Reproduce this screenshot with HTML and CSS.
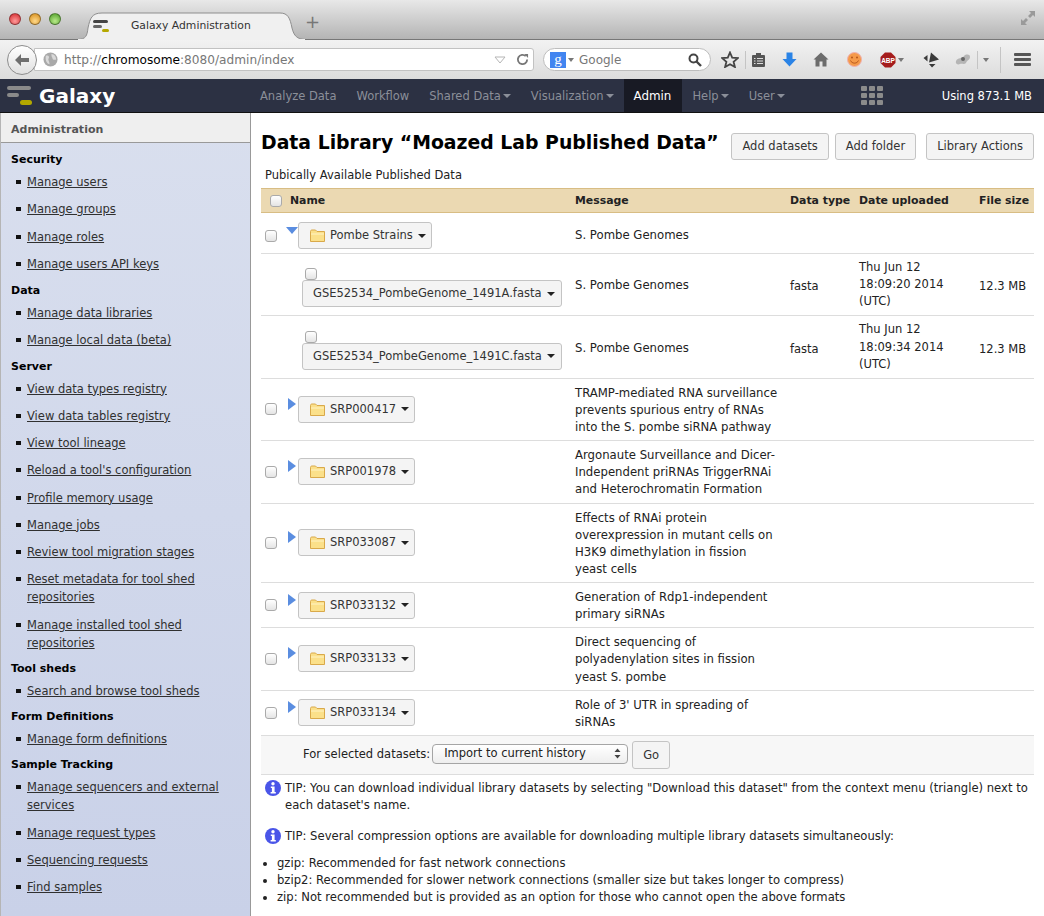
FILE: index.html
```html
<!DOCTYPE html>
<html>
<head>
    <title>Galaxy Administration</title>
    <link rel="stylesheet" href="styles.css">
</head>
<body>
    <div class="tabbar">
        <div class="lights"><i class="light red"></i><i class="light amber"></i><i class="light green"></i></div>
        <div class="tab">
            <svg class="tabshape" width="227" height="28" viewBox="0 0 227 28"><path d="M0 27.5C8 27 9 24 10 16C12 6 14 1 24 1H202C210 1 212 6 214 16C216 24 219 27 227 27.5V28H0Z" fill="#f0f0f0" stroke="#8e8e8e"/><path d="M0 28H227" stroke="#f0f0f0" stroke-width="2"/></svg>
            <svg class="tabicon" width="16" height="14" viewBox="0 0 16 14"><rect x="0" y="1" width="15" height="3" rx="1.5" fill="#444"/><rect x="0" y="6" width="9" height="3" rx="1.5" fill="#666"/><rect x="9" y="10" width="7" height="3" rx="1.5" fill="#b5a800"/></svg>
            <span class="tabtitle">Galaxy Administration</span>
        </div>
        <span class="newtab">+</span>
        <svg class="fullscreen" width="16" height="16" viewBox="0 0 16 16"><path d="M9 1H15V7L13 5L10 8L8 6L11 3ZM7 15H1V9L3 11L6 8L8 10L5 13Z" fill="#9a9a9a"/></svg>
    </div>

    <div class="toolbar">
        <div class="backbtn"><svg width="16" height="14" viewBox="0 0 16 14"><path d="M7 1L1 7L7 13V9H15V5H7Z" fill="#6f6f6f"/></svg></div>
        <div class="urlbox">
            <svg width="15" height="15" viewBox="0 0 16 16"><circle cx="8" cy="8" r="7.5" fill="#a9a9a9"/><path d="M3 4C6 3 7 5 6 7C5 9 7 10 7 13C5 13 2 10 3 4ZM9 2C12 2 14 5 14 8C12 9 10 8 10 6C9 5 9 3 9 2Z" fill="#d9d9d9"/></svg>
            <span class="url"><span class="dim">http://</span>chromosome<span class="dim">:8080/admin/index</span></span>
            <svg class="urlmark" width="12" height="8" viewBox="0 0 12 8"><path d="M1 1H11L6 7Z" fill="none" stroke="#b5b5b5"/></svg>
            <svg width="13" height="13" viewBox="0 0 14 14"><path d="M12 7A5 5 0 1 1 10.5 3.4" fill="none" stroke="#777" stroke-width="2"/><path d="M9 1H13V5.5Z" fill="#777"/></svg>
        </div>
        <div class="searchbox">
            <span class="glogo">g</span><i class="caret grey"></i>
            <span class="searchtext">Google</span>
            <svg width="14" height="14" viewBox="0 0 14 14"><circle cx="5.5" cy="5.5" r="4" fill="none" stroke="#444" stroke-width="2"/><path d="M8.5 8.5L13 13" stroke="#444" stroke-width="2.4"/></svg>
        </div>
        <div class="tools">
            <svg class="t-star" width="18" height="17" viewBox="0 0 18 17"><path d="M9 1.5L11.2 6.6L16.8 7.1L12.6 10.7L13.9 16L9 13.2L4.1 16L5.4 10.7L1.2 7.1L6.8 6.6Z" fill="none" stroke="#444" stroke-width="1.8"/></svg>
            <i class="sep"></i>
            <svg class="t-list" width="15" height="16" viewBox="0 0 15 16"><rect x="1" y="3" width="13" height="12" rx="1" fill="#555"/><rect x="5" y="1" width="5" height="3" fill="#555"/><path d="M3 6.5H4.5M6 6.5H12M3 9H4.5M6 9H12M3 11.5H4.5M6 11.5H12" stroke="#ddd" stroke-width="1.1"/></svg>
            <svg class="t-down" width="15" height="15" viewBox="0 0 15 15"><path d="M4.5 0.5H10.5V7H14.5L7.5 14.5L0.5 7H4.5Z" fill="#2a83e6"/></svg>
            <svg class="t-home" width="16" height="15" viewBox="0 0 16 15"><path d="M8 0.5L15.5 7.5H13.5V14.5H9.5V9.5H6.5V14.5H2.5V7.5H0.5Z" fill="#6c6c6c"/></svg>
            <svg class="t-smile" width="15" height="15" viewBox="0 0 15 15"><circle cx="7.5" cy="7.5" r="7" fill="#f59a4a" stroke="#eeb0b0"/><circle cx="5" cy="5.5" r="1" fill="#b5561a"/><circle cx="10" cy="5.5" r="1" fill="#b5561a"/><path d="M3.5 8.5C5 12 10 12 11.5 8.5" fill="none" stroke="#b5561a"/></svg>
            <svg class="t-abp" width="16" height="16" viewBox="0 0 16 16"><path d="M5 0.5H11L15.5 5V11L11 15.5H5L0.5 11V5Z" fill="#a51c1c"/><text x="8" y="10.5" font-family="Liberation Sans" font-size="6.5" font-weight="700" fill="#fff" text-anchor="middle">ABP</text></svg>
            <i class="caret grey abpcaret"></i>
            <svg class="t-arrow" width="17" height="16" viewBox="0 0 17 16"><path d="M8 0.5L16 7.5L6 10.5ZM0.5 6L4.5 3V9.5ZM6 12H12.5L9 15.5Z" fill="#3a3a3a"/></svg>
            <svg class="t-bug" width="16" height="13" viewBox="0 0 16 13"><path d="M1 8C3 4 7 6 9 3C11 1 15 1 15 4C15 7 12 7 11 10C9 12 7 10 5 11C3 12 0 11 1 8Z" fill="#b5b5b5"/><circle cx="8" cy="6" r="2" fill="#666"/></svg>
            <i class="sep bugsep"></i>
            <i class="caret grey"></i>
            <i class="sep menusep"></i>
            <div class="burger"><i></i><i></i><i></i></div>
        </div>
    </div>

    <div class="navbar">
        <div class="brand">
            <svg width="25" height="21" viewBox="0 0 25 21"><rect x="0" y="1" width="24" height="4" rx="2" fill="#8a8a8a"/><rect x="0" y="8" width="12" height="4" rx="2" fill="#8a8a8a"/><rect x="13" y="15" width="12" height="5" rx="2.5" fill="#b3a800"/></svg>
            <span class="brandname">Galaxy</span>
        </div>
        <ul class="navmenu">
            <li><a>Analyze Data</a></li>
            <li><a>Workflow</a></li>
            <li><a>Shared Data<i class="caret"></i></a></li>
            <li><a>Visualization<i class="caret"></i></a></li>
            <li class="active"><a>Admin</a></li>
            <li><a>Help<i class="caret"></i></a></li>
            <li><a>User<i class="caret"></i></a></li>
        </ul>
        <div class="gridicon"><i></i><i></i><i></i><i></i><i></i><i></i><i></i><i></i><i></i></div>
        <span class="quota">Using 873.1 MB</span>
    </div>

    <div class="main">
        <div class="sidebar">
            <div class="sidehead">Administration</div>
            <div class="sidebody">
                <h4>Security</h4>
                <ul>
                    <li><a>Manage users</a></li>
                    <li><a>Manage groups</a></li>
                    <li><a>Manage roles</a></li>
                    <li><a>Manage users API keys</a></li>
                </ul>
                <h4>Data</h4>
                <ul>
                    <li><a>Manage data libraries</a></li>
                    <li><a>Manage local data (beta)</a></li>
                </ul>
                <h4>Server</h4>
                <ul>
                    <li><a>View data types registry</a></li>
                    <li><a>View data tables registry</a></li>
                    <li><a>View tool lineage</a></li>
                    <li><a>Reload a tool's configuration</a></li>
                    <li><a>Profile memory usage</a></li>
                    <li><a>Manage jobs</a></li>
                    <li><a>Review tool migration stages</a></li>
                    <li><a>Reset metadata for tool shed repositories</a></li>
                    <li><a>Manage installed tool shed repositories</a></li>
                </ul>
                <h4>Tool sheds</h4>
                <ul>
                    <li><a>Search and browse tool sheds</a></li>
                </ul>
                <h4>Form Definitions</h4>
                <ul>
                    <li><a>Manage form definitions</a></li>
                </ul>
                <h4>Sample Tracking</h4>
                <ul>
                    <li><a>Manage sequencers and external services</a></li>
                    <li><a>Manage request types</a></li>
                    <li><a>Sequencing requests</a></li>
                    <li><a>Find samples</a></li>
                </ul>
            </div>
        </div>

        <div class="content">
            <div class="titlerow">
                <h2>Data Library “Moazed Lab Published Data”</h2>
                <div class="actions">
                    <button class="btn">Add datasets</button>
                    <button class="btn">Add folder</button>
                    <button class="btn">Library Actions</button>
                </div>
            </div>
            <p class="desc">Pubically Available Published Data</p>

            <table class="libtable">
                <colgroup><col class="c-name"><col class="c-msg"><col class="c-type"><col class="c-date"><col class="c-size"></colgroup>
                <thead>
                    <tr>
                        <th><span class="namehead"><i class="check"></i>Name</span></th>
                        <th>Message</th><th>Data type</th><th>Date uploaded</th><th>File size</th>
                    </tr>
                </thead>
                <tbody>
                    <tr>
                        <td><div class="folder"><i class="check"></i><i class="arrow open"></i><span class="menubtn"><svg class="foldericon" width="15" height="13"><use href="#folder"/></svg>Pombe Strains<i class="caret dark"></i></span></div></td>
                        <td>S. Pombe Genomes</td><td></td><td></td><td></td>
                    </tr>
                    <tr>
                        <td><div class="dataset"><i class="check"></i><span class="menubtn">GSE52534_PombeGenome_1491A.fasta<i class="caret dark"></i></span></div></td>
                        <td>S. Pombe Genomes</td><td>fasta</td><td>Thu Jun 12 18:09:20 2014 (UTC)</td><td>12.3 MB</td>
                    </tr>
                    <tr>
                        <td><div class="dataset"><i class="check"></i><span class="menubtn">GSE52534_PombeGenome_1491C.fasta<i class="caret dark"></i></span></div></td>
                        <td>S. Pombe Genomes</td><td>fasta</td><td>Thu Jun 12 18:09:34 2014 (UTC)</td><td>12.3 MB</td>
                    </tr>
                    <tr>
                        <td><div class="folder"><i class="check"></i><i class="arrow"></i><span class="menubtn"><svg class="foldericon" width="15" height="13"><use href="#folder"/></svg>SRP000417<i class="caret dark"></i></span></div></td>
                        <td>TRAMP-mediated RNA surveillance prevents spurious entry of RNAs into the S. pombe siRNA pathway</td><td></td><td></td><td></td>
                    </tr>
                    <tr>
                        <td><div class="folder"><i class="check"></i><i class="arrow"></i><span class="menubtn"><svg class="foldericon" width="15" height="13"><use href="#folder"/></svg>SRP001978<i class="caret dark"></i></span></div></td>
                        <td>Argonaute Surveillance and Dicer-Independent priRNAs TriggerRNAi and Heterochromatin Formation</td><td></td><td></td><td></td>
                    </tr>
                    <tr>
                        <td><div class="folder"><i class="check"></i><i class="arrow"></i><span class="menubtn"><svg class="foldericon" width="15" height="13"><use href="#folder"/></svg>SRP033087<i class="caret dark"></i></span></div></td>
                        <td>Effects of RNAi protein overexpression in mutant cells on H3K9 dimethylation in fission yeast cells</td><td></td><td></td><td></td>
                    </tr>
                    <tr>
                        <td><div class="folder"><i class="check"></i><i class="arrow"></i><span class="menubtn"><svg class="foldericon" width="15" height="13"><use href="#folder"/></svg>SRP033132<i class="caret dark"></i></span></div></td>
                        <td>Generation of Rdp1-independent primary siRNAs</td><td></td><td></td><td></td>
                    </tr>
                    <tr>
                        <td><div class="folder"><i class="check"></i><i class="arrow"></i><span class="menubtn"><svg class="foldericon" width="15" height="13"><use href="#folder"/></svg>SRP033133<i class="caret dark"></i></span></div></td>
                        <td>Direct sequencing of polyadenylation sites in fission yeast S. pombe</td><td></td><td></td><td></td>
                    </tr>
                    <tr>
                        <td><div class="folder"><i class="check"></i><i class="arrow"></i><span class="menubtn"><svg class="foldericon" width="15" height="13"><use href="#folder"/></svg>SRP033134<i class="caret dark"></i></span></div></td>
                        <td>Role of 3' UTR in spreading of siRNAs</td><td></td><td></td><td></td>
                    </tr>
                </tbody>
                <tfoot>
                    <tr>
                        <td colspan="5">
                            <div class="bulk">
                                <span>For selected datasets:</span>
                                <span class="selectbox">Import to current history<svg width="7" height="11" viewBox="0 0 7 11"><path d="M3.5 0.5L6.5 4H0.5ZM3.5 10.5L0.5 7H6.5Z" fill="#444"/></svg></span>
                                <button class="btn go">Go</button>
                            </div>
                        </td>
                    </tr>
                </tfoot>
            </table>

            <div class="tip"><svg class="infoicon" width="16" height="16"><use href="#info"/></svg><p>TIP: You can download individual library datasets by selecting "Download this dataset" from the context menu (triangle) next to each dataset's name.</p></div>
            <div class="tip second"><svg class="infoicon" width="16" height="16"><use href="#info"/></svg><p>TIP: Several compression options are available for downloading multiple library datasets simultaneously:</p></div>
            <ul class="formats">
                <li>gzip: Recommended for fast network connections</li>
                <li>bzip2: Recommended for slower network connections (smaller size but takes longer to compress)</li>
                <li>zip: Not recommended but is provided as an option for those who cannot open the above formats</li>
            </ul>
        </div>
    </div>

    <svg class="defs" width="0" height="0">
        <symbol id="folder" viewBox="0 0 15 13"><path d="M0.5 2.5C0.5 1.5 1 1 2 1H5.5L7 2.5H14.5V12.5H0.5Z" fill="#fbe08a" stroke="#d9a94a"/><path d="M1 5H14" stroke="#fff3c4"/></symbol>
        <symbol id="info" viewBox="0 0 16 16"><circle cx="8" cy="8" r="8" fill="#4a55e8"/><circle cx="8" cy="3.8" r="1.7" fill="#fff"/><path d="M5.8 6.5H9.6V12H10.8V13.5H5.6V12H6.9V8H5.8Z" fill="#fff"/></symbol>
    </svg>
</body>
</html>
```

FILE: styles.css
```css
html, body{
    margin: 0;
    padding: 0;
    height: 916px;
    overflow: hidden;
    background: #fff;
    font-family: "DejaVu Sans", sans-serif;
    font-size: 11.5px;
    color: #222;
}
ul{
    margin: 0;
    padding: 0;
}
.defs{
    display: block;
}

/* browser chrome */
.tabbar{
    height: 39px;
    display: flex;
    align-items: flex-end;
    background: linear-gradient(#e8e8e8, #b4b4b4);
    border-bottom: 1px solid #777;
    box-sizing: content-box;
}
.lights{
    display: flex;
    gap: 8px;
    align-self: flex-start;
    margin: 13px 0 0 9px;
    width: 72px;
}
.light{
    width: 12px;
    height: 12px;
    border-radius: 50%;
    border: 1px solid rgba(0,0,0,.35);
    box-sizing: border-box;
}
.red{ background: radial-gradient(circle at 50% 70%, #ff9a9a, #d2262a); }
.amber{ background: radial-gradient(circle at 50% 70%, #ffd98a, #d48a16); }
.green{ background: radial-gradient(circle at 50% 70%, #b9ea8a, #4c9c26); }
.tab{
    position: relative;
    width: 227px;
    height: 29px;
    margin-left: -3px;
    margin-bottom: -1px;
    display: flex;
    align-items: center;
    color: #333;
}
.tabshape{
    position: absolute;
    left: 0;
    top: 1px;
}
.tabicon{
    position: relative;
    margin-left: 15px;
}
.tabtitle{
    position: relative;
    margin-left: 22px;
    font-size: 10.8px;
}
.newtab{
    margin: 0 0 7px 0;
    font-size: 18px;
    line-height: 20px;
    color: #777;
}
.fullscreen{
    margin: 0 8px 13px auto;
}
.toolbar{
    height: 39px;
    display: flex;
    align-items: center;
    background: linear-gradient(#f2f2f2, #dcdcdc);
    box-sizing: border-box;
    padding-left: 7px;
}
.backbtn{
    width: 30px;
    height: 30px;
    box-sizing: border-box;
    border: 1px solid #8d8d8d;
    border-radius: 50%;
    background: linear-gradient(#fff, #e0e0e0);
    display: flex;
    align-items: center;
    justify-content: center;
    position: relative;
    z-index: 1;
}
.urlbox{
    width: 500px;
    height: 23px;
    margin-left: -3px;
    box-sizing: border-box;
    display: flex;
    align-items: center;
    background: #fff;
    border: 1px solid #c2c2c2;
    border-radius: 0 3px 3px 0;
    padding: 0 4px 0 8px;
}
.url{
    margin-left: 6px;
    flex: 1;
    color: #000;
    font-size: 12.15px;
}
.dim{
    color: #777;
}
.urlmark{
    margin-right: 10px;
}
.searchbox{
    width: 168px;
    height: 23px;
    margin-left: 9px;
    box-sizing: border-box;
    display: flex;
    align-items: center;
    background: #fff;
    border: 1px solid #bdbdbd;
    border-radius: 12px;
    padding: 0 8px 0 6px;
}
.glogo{
    width: 16px;
    height: 16px;
    background: #4285f0;
    color: #fff;
    font-family: "Liberation Serif", serif;
    font-size: 15px;
    line-height: 14px;
    text-align: center;
}
.searchtext{
    margin-left: 5px;
    flex: 1;
    color: #777;
    font-size: 12px;
}
.tools{
    flex: 1;
    display: flex;
    align-items: center;
    height: 100%;
}
.t-star{ margin-left: 10px; }
.sep{
    width: 1px;
    height: 18px;
    background: #c4c4c4;
}
.tools > .sep:first-of-type{ margin-left: 6px; }
.t-list{ margin-left: 5px; }
.t-down{ margin-left: 16px; }
.t-home{ margin-left: 16px; }
.t-smile{ margin-left: 18px; }
.t-abp{ margin-left: 18px; }
.abpcaret{ margin-left: 3px; }
.t-arrow{ margin-left: 19px; }
.t-bug{ margin-left: 15px; }
.bugsep{ margin-left: 6px; margin-right: 3px; }
.menusep{ margin-left: 11px; height: 26px; }
.burger{
    margin-left: 13px;
    display: flex;
    flex-direction: column;
    gap: 2px;
}
.burger i{
    display: block;
    width: 17px;
    height: 3px;
    background: #555;
    border-radius: 1px;
}
.caret{
    display: inline-block;
    width: 0;
    height: 0;
    margin-left: 2px;
    vertical-align: middle;
    border-left: 4px solid transparent;
    border-right: 4px solid transparent;
    border-top: 4px solid #8b8f99;
}
.caret.grey{
    border-top-color: #777;
    border-left-width: 3.5px;
    border-right-width: 3.5px;
    margin-left: 2px;
}
.caret.dark{
    border-top-color: #222;
    margin-left: 5px;
}

/* galaxy masthead */
.navbar{
    height: 33px;
    display: flex;
    align-items: center;
    background: #2c3143;
    border-bottom: 1px solid #111;
    box-sizing: content-box;
}
.brand{
    display: flex;
    align-items: center;
    width: 250px;
    padding-left: 7px;
    box-sizing: border-box;
    color: #fff;
}
.brandname{
    margin-left: 7px;
    font-size: 20px;
    font-weight: bold;
}
.navmenu{
    display: flex;
    list-style: none;
    height: 100%;
}
.navmenu a{
    display: flex;
    align-items: center;
    height: 100%;
    padding: 0 10px;
    color: #8b8f99;
}
.navmenu li.active{
    background: #181a24;
}
.navmenu li.active a{
    color: #fff;
    padding: 0 11px 0 10px;
    font-size: 11.9px;
}
.gridicon{
    margin-left: auto;
    display: grid;
    grid-template-columns: repeat(3, 6px);
    grid-auto-rows: 5px;
    gap: 2px;
}
.gridicon i{
    background: #8b8b8b;
    border-radius: 1px;
}
.quota{
    margin: 0 12px 0 59px;
    color: #fff;
}

/* page */
.main{
    display: flex;
    height: 803px;
}
.sidebar{
    width: 251px;
    flex: none;
    box-sizing: border-box;
    border-right: 1px solid #999;
    border-left: 1px solid #b5b5b5;
    background: linear-gradient(#d9dfee, #c9d1e8);
}
.sidehead{
    height: 30px;
    box-sizing: border-box;
    line-height: 34px;
    padding-left: 10px;
    background: #efefef;
    border-bottom: 1px solid #999;
    font-size: 11px;
    font-weight: bold;
    color: #555;
}
.sidebody{
    padding: 9px 10px 0 10px;
}
.sidebody h4{
    margin: 0 0 5px;
    font-size: 11px;
    line-height: 16px;
    color: #000;
}
.sidebody ul{
    list-style: none;
    padding-left: 5px;
}
.sidebody ul:first-of-type{
    padding-bottom: 1px;
}
.sidebody li{
    position: relative;
    padding-left: 11px;
    line-height: 18px;
    margin-bottom: 9.25px;
}
.sidebody li::before{
    content: "";
    position: absolute;
    left: 0;
    top: 7px;
    width: 5px;
    height: 4px;
    background: #111;
}
.sidebody a{
    color: #303030;
    text-decoration: underline;
}

.content{
    flex: 1;
    padding: 0 10px 0 10px;
    min-width: 0;
}
.titlerow{
    display: flex;
    justify-content: space-between;
    align-items: center;
    height: 61px;
    padding-top: 1px;
    box-sizing: border-box;
}
.titlerow h2{
    margin: 0 0 4px;
    font-size: 18.85px;
    font-weight: bold;
    color: #000;
    white-space: nowrap;
}
.actions{
    display: flex;
    gap: 6px;
    margin-top: 4px;
}
.actions .btn:last-child{
    margin-left: 4px;
}
.btn{
    height: 27px;
    padding: 0 10px;
    font: inherit;
    color: #333;
    background: #f4f4f4;
    border: 1px solid #c4c4c4;
    border-radius: 3px;
    white-space: nowrap;
}
.desc{
    margin: -7px 0 0 4px;
    line-height: 17px;
    height: 17px;
    color: #222;
}
.libtable{
    width: 773px;
    margin-top: 4px;
    border-collapse: collapse;
    table-layout: fixed;
}
.c-name{ width: 309px; }
.c-msg{ width: 215px; }
.c-type{ width: 69px; }
.c-date{ width: 120px; }
.c-size{ width: 60px; }
.libtable th{
    height: 23px;
    padding: 0 5px;
    text-align: left;
    font-size: 10.9px;
    font-weight: bold;
    color: #222;
    background: #ebd9b2;
    border-top: 1px solid #d8bd84;
    border-bottom: 1px solid #d8bd84;
    white-space: nowrap;
}
.libtable th:first-child{
    padding-left: 9px;
}
.libtable td{
    padding: 5px;
    line-height: 17.12px;
    border-bottom: 1px solid #ddd;
    vertical-align: middle;
}
.libtable tbody td:nth-child(2){
    font-size: 11.7px;
    padding-top: 6px;
    padding-bottom: 4px;
}
.libtable tbody td:nth-child(3),
.libtable tbody td:nth-child(5){
    padding-top: 7px;
    padding-bottom: 3px;
}
.libtable tbody tr:first-child td,
.libtable tbody tr:first-child td:nth-child(2){
    padding: 9px 5px 4px;
}
.libtable tbody td:first-child,
.libtable tbody tr:first-child td:first-child{
    padding-left: 4px;
}
.namehead{
    display: flex;
    align-items: center;
    gap: 8px;
}
.check{
    display: block;
    flex: none;
    width: 12px;
    height: 12px;
    box-sizing: border-box;
    border: 1px solid #aaa;
    border-radius: 3px;
    background: linear-gradient(#fff, #e4e4e4);
}
.folder{
    display: flex;
    align-items: center;
}
.arrow{
    display: block;
    width: 0;
    height: 0;
    align-self: flex-start;
    margin: 2px 2px 0 11px;
    border-top: 6px solid transparent;
    border-bottom: 6px solid transparent;
    border-left: 8px solid #5a8de0;
}
.arrow.open{
    margin: 5px 0 0 9px;
    border-left: 6.5px solid transparent;
    border-right: 6.5px solid transparent;
    border-top: 7px solid #5a8de0;
    border-bottom: 0;
}
.menubtn{
    display: inline-flex;
    align-items: center;
    height: 27px;
    padding: 0 6px 0 10px;
    box-sizing: border-box;
    background: #f4f4f4;
    border: 1px solid #c4c4c4;
    border-radius: 3px;
    color: #333;
    white-space: nowrap;
}
.folder .menubtn{
    padding: 0 5px 0 11px;
}
.foldericon{
    margin-right: 5px;
}
.dataset{
    padding: 6px 0 0 37px;
    display: flex;
    flex-direction: column;
    align-items: flex-start;
}
.dataset .check{
    margin-left: 3px;
}
.bulk{
    display: flex;
    align-items: center;
    padding-left: 37px;
    height: 28px;
}
.libtable tfoot td{
    background: #f7f7f7;
    border-top: 1px solid #ddd;
    border-bottom: 1px solid #ddd;
}
.selectbox{
    width: 196px;
    height: 20px;
    margin: 0 0 2px 2px;
    padding: 0 6px 0 11px;
    box-sizing: border-box;
    display: flex;
    align-items: center;
    justify-content: space-between;
    background: linear-gradient(#fff, #eee);
    border: 1px solid #a5a5a5;
    border-radius: 4px;
}
.btn.go{
    margin-left: 4px;
    width: 38px;
    padding: 0;
    height: 28px;
    margin-top: 1px;
}
.tip{
    display: flex;
    gap: 3px;
    margin-top: 5px;
    line-height: 17px;
    font-size: 11.62px;
}
.tip.second{
    margin-top: 14px;
}
.tip p{
    margin: 0;
}
.infoicon{
    flex: none;
    margin: 0 1px 0 4px;
}
.formats{
    margin-top: 10px;
    padding-left: 16px;
    line-height: 17px;
    font-size: 11.62px;
}
```
